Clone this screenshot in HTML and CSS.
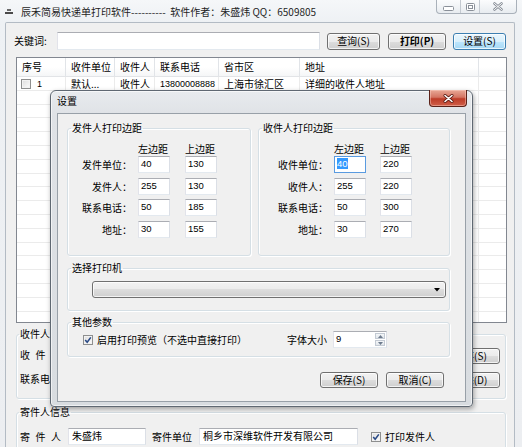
FILE: index.html
```html
<!DOCTYPE html>
<html lang="zh-CN">
<head>
<meta charset="utf-8">
<title>辰禾简易快递单打印软件</title>
<link rel="stylesheet" href="styles.css">
</head>
<body>
<div class="titlebar">
  <svg class="app-icon" width="8" height="6" viewBox="0 0 8 6"><rect x="2" y="0" width="4" height="2" fill="#6a6a6a"/><rect x="0" y="3" width="8" height="2" fill="#4a4a4a"/></svg>
  <span class="title">辰禾简易快递单打印软件----------  软件作者：朱盛炜 QQ：6509805</span>
  <div class="caption">
    <span class="cap cap-min"><svg width="11" height="5" viewBox="0 0 11 5"><rect x="0.5" y="0.5" width="10" height="4" rx="1" fill="#fff" stroke="#8a9099"/></svg></span>
    <span class="cap cap-max"><svg width="9" height="8" viewBox="0 0 9 8"><rect x="0.5" y="0.5" width="8" height="7" rx="1" fill="#fff" stroke="#8a9099"/><rect x="2.5" y="2.5" width="4" height="3" fill="none" stroke="#8a9099"/></svg></span>
    <span class="cap cap-close"><svg width="10" height="9" viewBox="0 0 10 9"><path d="M1.5 1.5 L8.5 7.5 M8.5 1.5 L1.5 7.5" stroke="#8a9099" stroke-width="2.6" stroke-linecap="round"/><path d="M1.5 1.5 L8.5 7.5 M8.5 1.5 L1.5 7.5" stroke="#fff" stroke-width="1" stroke-linecap="round"/></svg></span>
  </div>
</div>

<div class="client">
  <div class="search">
    <span class="lbl">关键词:</span>
    <span class="txt kw"></span>
    <span class="btn b-query">查询(S)</span>
    <span class="btn b-print">打印(P)</span>
    <span class="btn b-set hot">设置(S)</span>
  </div>

  <div class="list">
    <div class="lv-head">
      <span class="c1">序号</span><span class="c2">收件单位</span><span class="c3">收件人</span><span class="c4">联系电话</span><span class="c5">省市区</span><span class="c6">地址</span><span class="c7"></span>
    </div>
    <div class="lv-body">
      <div class="lv-row">
        <span class="c1"><span class="chk"></span><span class="idx">1</span></span>
        <span class="c2">默认...</span>
        <span class="c3">收件人</span>
        <span class="c4 phone">13800008888</span>
        <span class="c5">上海市徐汇区</span>
        <span class="c6">详细的收件人地址</span>
        <span class="c7"></span>
      </div>
    </div>
  </div>

  <fieldset class="grp recv">
    <legend>收件人</legend>
    <div class="recv-body">
      <div class="recv-fields">
        <div class="frow"><span class="spaced">收件人</span><span class="txt fld"></span></div>
        <div class="frow"><span class="plain">联系电话</span><span class="txt fld"></span></div>
      </div>
      <div class="recv-btns">
        <span class="btn">保存(S)</span>
        <span class="btn">删除(D)</span>
      </div>
    </div>
  </fieldset>

  <fieldset class="grp send">
    <legend>寄件人信息</legend>
    <div class="send-row">
      <span class="spaced">寄件人</span>
      <span class="txt s-name">朱盛炜</span>
      <span class="s-lbl">寄件单位</span>
      <span class="txt s-corp">桐乡市深维软件开发有限公司</span>
      <span class="chk s-chk"><svg width="8" height="8" viewBox="0 0 8 8"><path d="M1.2 4 L3.2 6.3 L6.8 1.4" fill="none" stroke="#2a4a86" stroke-width="1.6"/></svg></span>
      <span class="s-chk-lbl">打印发件人</span>
    </div>
  </fieldset>
</div>

<div class="dialog">
  <div class="dlg-head">
    <span class="dlg-title">设置</span>
    <span class="dlg-close"><svg width="11" height="9" viewBox="0 0 11 9"><path d="M2 1.5 L9 7.5 M9 1.5 L2 7.5" stroke="#5a1a12" stroke-width="3" stroke-linecap="round"/><path d="M2 1.5 L9 7.5 M9 1.5 L2 7.5" stroke="#fff" stroke-width="1.6" stroke-linecap="round"/></svg></span>
  </div>
  <div class="dlg-client">
    <div class="margins">
      <fieldset class="grp m-send">
        <legend>发件人打印边距</legend>
        <div class="mtable">
          <div class="mhead"><span></span><span>左边距</span><span>上边距</span></div>
          <div class="mrow"><span class="rl">发件单位：</span><span class="txt num">40</span><span class="txt num">130</span></div>
          <div class="mrow"><span class="rl">发件人：</span><span class="txt num">255</span><span class="txt num">130</span></div>
          <div class="mrow"><span class="rl">联系电话：</span><span class="txt num">50</span><span class="txt num">185</span></div>
          <div class="mrow"><span class="rl">地址：</span><span class="txt num">30</span><span class="txt num">155</span></div>
        </div>
      </fieldset>
      <fieldset class="grp m-recv">
        <legend>收件人打印边距</legend>
        <div class="mtable">
          <div class="mhead"><span></span><span>左边距</span><span>上边距</span></div>
          <div class="mrow"><span class="rl">收件单位：</span><span class="txt num sel"><span class="hl">40</span></span><span class="txt num">220</span></div>
          <div class="mrow"><span class="rl">收件人：</span><span class="txt num">255</span><span class="txt num">220</span></div>
          <div class="mrow"><span class="rl">联系电话：</span><span class="txt num">50</span><span class="txt num">300</span></div>
          <div class="mrow"><span class="rl">地址：</span><span class="txt num">30</span><span class="txt num">270</span></div>
        </div>
      </fieldset>
    </div>

    <fieldset class="grp printer">
      <legend>选择打印机</legend>
      <div class="combo"><svg width="6" height="4" viewBox="0 0 6 4"><path d="M0 0 H6 L3 3.5 Z" fill="#000"/></svg></div>
    </fieldset>

    <fieldset class="grp other">
      <legend>其他参数</legend>
      <div class="other-row">
        <span class="chk"><svg width="8" height="8" viewBox="0 0 8 8"><path d="M1.2 4 L3.2 6.3 L6.8 1.4" fill="none" stroke="#2a4a86" stroke-width="1.6"/></svg></span>
        <span class="chk-lbl">启用打印预览（不选中直接打印）</span>
        <span class="font-lbl">字体大小</span>
        <span class="txt spin"><span class="spin-val">9</span><span class="spin-btns"><span><svg width="5" height="3" viewBox="0 0 5 3"><path d="M0 3 L2.5 0 L5 3 Z" fill="#6d7b8d"/></svg></span><span><svg width="5" height="3" viewBox="0 0 5 3"><path d="M0 0 L2.5 3 L5 0 Z" fill="#6d7b8d"/></svg></span></span></span>
      </div>
    </fieldset>

    <div class="dlg-btns">
      <span class="btn">保存(S)</span>
      <span class="btn">取消(C)</span>
    </div>
  </div>
</div>
</body>
</html>
```

FILE: styles.css
```css
* { box-sizing: border-box; }
html, body { margin: 0; padding: 0; }
body {
  position: relative;
  width: 522px;
  height: 447px;
  overflow: hidden;
  font-family: "Noto Sans CJK SC", "Noto Sans", sans-serif;
  font-size: 10px;
  line-height: 12px;
  color: #000;
  background: linear-gradient(to bottom, #f5f7f9 0, #eef1f4 22px, #eceef1 100%);
}

/* ---------- title bar ---------- */
.titlebar { height: 22px; display: flex; align-items: flex-start; }
.app-icon { display: block; margin: 9px 0 0 5px; flex: none; }
.title { margin: 6px 0 0 8px; color: #1e1e1e; white-space: pre; }
.caption {
  display: flex;
  margin-left: auto;
  margin-right: 5px;
  height: 14px;
  border: 1px solid #a9b1ba;
  border-top: 0;
  border-radius: 0 0 4px 4px;
  background: linear-gradient(to bottom, #fbfcfd, #e8ecf0);
  overflow: hidden;
}
.cap { display: flex; align-items: center; justify-content: center; height: 100%; }
.cap + .cap { border-left: 1px solid #c4cad1; }
.cap-min { width: 23px; padding-top: 4px; }
.cap-max { width: 19px; }
.cap-close { width: 37px; }

/* ---------- main client ---------- */
.client {
  margin-left: 5px;
  width: 510px;
  height: 430px;
  border: 1px solid #b3bbc4;
  border-bottom: 0;
  border-radius: 2px 2px 0 0;
  background: #f0f0f0;
}

.search { display: flex; align-items: center; height: 18px; margin: 9px 0 0 8px; }
.search .lbl { width: 43px; }

.txt {
  display: block;
  background: #fff;
  border: 1px solid;
  border-color: #abadb3 #dbdfe6 #e3e9ef #e2e3ea;
}
.kw { width: 263px; height: 18px; }

.btn {
  display: flex;
  align-items: center;
  justify-content: center;
  height: 17px;
  border: 1px solid #707070;
  border-radius: 3px;
  background: linear-gradient(to bottom, #f2f2f2 0%, #ebebeb 50%, #dddddd 50%, #cfcfcf 100%);
  box-shadow: inset 0 0 0 1px rgba(255, 255, 255, 0.75);
  white-space: nowrap;
}
.b-query { width: 53px; margin-left: 7px; }
.b-print { width: 58px; margin-left: 8px; font-weight: bold; }
.b-set { width: 53px; margin-left: 7px; }
.hot {
  border-color: #3c7fb1;
  background: linear-gradient(to bottom, #eaf6fd 0%, #d9f0fc 50%, #bee6fd 50%, #a7d9f5 100%);
}

/* ---------- list view ---------- */
.list {
  margin: 7px 7px 0 10px;
  height: 266px;
  border: 1px solid #828790;
  background: #fff;
}
.lv-head, .lv-row { display: flex; }
.lv-head {
  height: 19px;
  border-bottom: 1px solid #e2e4e7;
  background: linear-gradient(to bottom, #ffffff 0, #ffffff 50%, #f5f6f7 100%);
}
.lv-head > span {
  display: flex;
  align-items: center;
  padding-left: 5px;
  border-right: 1px solid #e1e4e8;
}
.lv-row { height: 13.8px; }
.lv-row > span { display: flex; align-items: center; padding-left: 5px; white-space: nowrap; overflow: hidden; }
.c1 { width: 49px; flex: none; }
.c2 { width: 49px; flex: none; }
.c3 { width: 40px; flex: none; }
.c4 { width: 64px; flex: none; }
.c5 { width: 81px; flex: none; }
.c6 { width: 179px; flex: none; }
.c7 { flex: 1; }
.lv-head > .c7 { border-right: 0; }
.lv-row > .c1 { padding-left: 4px; }
.idx { margin-left: 6px; font-family: "Liberation Sans", sans-serif; font-size: 9px; }
.phone { font-family: "Liberation Sans", sans-serif; font-size: 9px; }
.lv-body {
  height: 245px;
  background-color: #fff;
  background-image:
    linear-gradient(#ebebeb, #ebebeb),
    linear-gradient(#ebebeb, #ebebeb),
    linear-gradient(#ebebeb, #ebebeb),
    linear-gradient(#ebebeb, #ebebeb),
    linear-gradient(#ebebeb, #ebebeb),
    linear-gradient(#ebebeb, #ebebeb),
    repeating-linear-gradient(to bottom, transparent 0, transparent 12.8px, #ebebeb 12.8px, #ebebeb 13.8px);
  background-size: 1px 100%, 1px 100%, 1px 100%, 1px 100%, 1px 100%, 1px 100%, 100% 100%;
  background-position: 48px 0, 97px 0, 137px 0, 201px 0, 282px 0, 461px 0, 0 0;
  background-repeat: no-repeat;
}

/* ---------- checkbox ---------- */
.chk {
  display: inline-flex;
  align-items: center;
  justify-content: center;
  width: 10px;
  height: 10px;
  flex: none;
  border: 1px solid #8e8f8f;
  background: linear-gradient(135deg, #dcdcdc 0%, #fdfdfd 100%);
  box-shadow: inset 0 0 0 1px #f2f2f2;
}

/* ---------- group boxes ---------- */
.grp {
  margin: 0;
  padding: 0;
  min-width: 0;
  border: 1px solid #d5dfe5;
  border-radius: 3px;
  box-shadow: inset 1px 1px 0 #fff, 1px 1px 0 #fff;
}
.grp > legend { padding: 0 1px; margin-left: 2px; line-height: 12px; }

.recv { margin: 5px 8px 0 10px; height: 71px; }
.recv-body { display: flex; padding: 7px 5px 0 3px; }
.recv-fields { display: flex; flex-direction: column; gap: 8px; }
.frow { display: flex; align-items: center; height: 16px; }
.spaced { width: 48px; letter-spacing: 5.5px; white-space: nowrap; flex: none; }
.plain { width: 48px; flex: none; white-space: nowrap; }
.fld { width: 150px; height: 16px; }
.recv-btns { margin-left: auto; display: flex; flex-direction: column; gap: 8px; padding-top: 1px; }
.recv-btns .btn { width: 59px; height: 16px; }

.send { margin: 7px 8px 0 10px; height: 60px; }
.send-row { display: flex; align-items: center; height: 17px; margin-top: 10px; padding-left: 3px; }
.s-name { width: 78px; height: 17px; padding: 1px 0 0 3px; }
.s-lbl { margin-left: 6px; width: 40px; white-space: nowrap; }
.s-corp { margin-left: 7px; width: 159px; height: 17px; padding: 1px 0 0 3px; white-space: nowrap; }
.s-chk { margin-left: 13px; }
.s-chk-lbl { margin-left: 4px; }

/* ---------- dialog ---------- */
.dialog {
  position: absolute;
  left: 50px;
  top: 90px;
  width: 423px;
  height: 317px;
  display: flex;
  flex-direction: column;
  padding: 0 6px 4px 6px;
  border: 1px solid #5f6872;
  border-radius: 6px 6px 4px 4px;
  background: linear-gradient(to bottom, #e8ebee 0, #dfe2e6 24px, #d8dce0 100%);
  box-shadow: inset 0 0 0 1px rgba(255, 255, 255, 0.6), 1px 2px 5px rgba(0, 0, 0, 0.35);
}
.dlg-head { height: 22px; display: flex; align-items: flex-start; flex: none; }
.dlg-title { margin-top: 4px; }
.dlg-close {
  display: flex;
  align-items: center;
  justify-content: center;
  margin: -1px -1px 0 auto;
  width: 38px;
  height: 17px;
  border: 1px solid #5b2219;
  border-top: 0;
  border-radius: 0 0 4px 4px;
  background: linear-gradient(to bottom, #e8a896 0%, #d47563 45%, #bd3c28 55%, #cf5f48 100%);
  box-shadow: inset 0 0 0 1px rgba(255, 210, 200, 0.45);
}
.dlg-client {
  flex: 1;
  border: 1px solid #98a0a8;
  background: #f0f0f0;
  padding: 8px 15px 0 9px;
}
.margins { display: flex; gap: 7px; }
.m-send { width: 184px; height: 134px; }
.m-recv { width: 192px; height: 134px; }
.dlg-client .grp > legend { margin-left: 3px; }
.mtable { padding: 9px 0 0 4px; }
.mhead, .mrow { display: grid; }
.m-send .mhead, .m-send .mrow { grid-template-columns: 66px 47px 32px; }
.m-recv .mhead, .m-recv .mrow { grid-template-columns: 71px 46px 32px; }
.mhead { height: 12px; margin-bottom: 1px; }
.mrow { height: 17px; }
.mrow + .mrow { margin-top: 4.67px; }
.rl { text-align: right; padding-right: 6px; line-height: 17px; white-space: nowrap; }
.num {
  width: 32px;
  height: 17px;
  padding: 1px 0 0 2px;
  font-family: "Liberation Sans", sans-serif;
  font-size: 9.5px;
  line-height: 12px;
}
.sel { border-color: #5a9be0; }
.hl { background: #3399ff; color: #fff; }

.printer { margin-top: 6px; height: 49px; }
.combo {
  display: flex;
  align-items: center;
  justify-content: flex-end;
  margin: 7px 3px 0 24px;
  height: 17px;
  padding-right: 5px;
  border: 1px solid #707070;
  border-radius: 3px;
  background: linear-gradient(to bottom, #f2f2f2 0%, #ebebeb 50%, #dddddd 50%, #cfcfcf 100%);
  box-shadow: inset 0 0 0 1px rgba(255, 255, 255, 0.75);
}

.other { margin-top: 5px; height: 41px; }
.other-row { display: flex; align-items: center; height: 17px; margin-top: 3px; padding: 0 62px 0 15px; }
.chk-lbl { margin-left: 4px; white-space: nowrap; }
.font-lbl { margin-left: auto; white-space: nowrap; }
.spin { display: flex; margin-left: 6px; width: 54px; height: 17px; }
.spin-val { flex: 1; padding: 1px 0 0 2px; font-family: "Liberation Sans", sans-serif; font-size: 9.5px; line-height: 12px; }
.spin-btns { display: flex; flex-direction: column; width: 10px; margin: 1px; gap: 1px; }
.spin-btns > span {
  flex: 1;
  display: flex;
  align-items: center;
  justify-content: center;
  border: 1px solid #c3cad3;
  background: linear-gradient(to bottom, #f4f6f8, #e2e7ec);
}

.dlg-btns { display: flex; justify-content: flex-end; gap: 8px; margin: 15px 6px 0 0; }
.dlg-btns .btn { width: 58px; height: 16px; }
```
